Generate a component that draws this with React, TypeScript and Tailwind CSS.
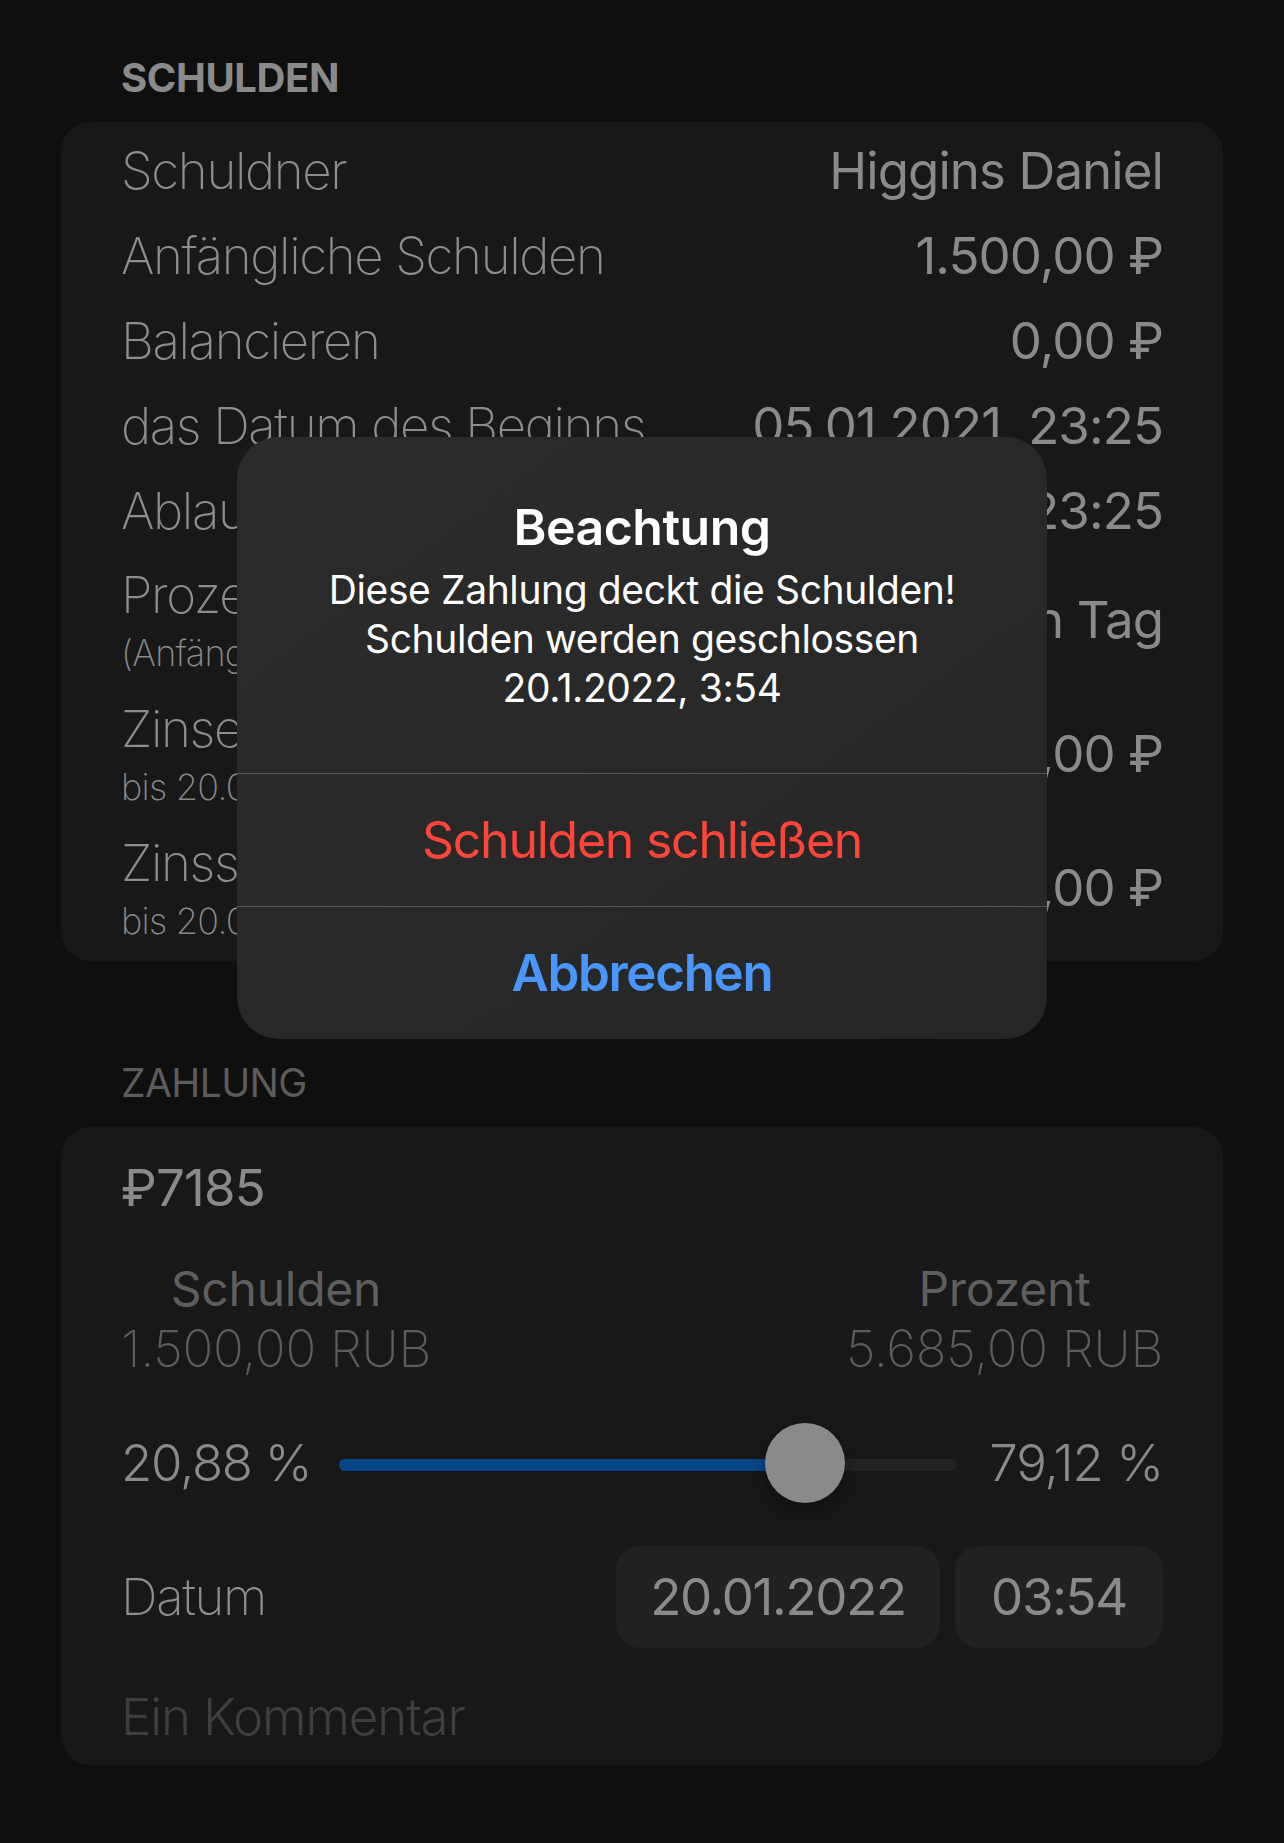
import React from 'react';

type DebtRow = { label: string; value: string; sub?: string };

const DEBT_ROWS: DebtRow[] = [
  { label: 'Schuldner', value: 'Higgins Daniel' },
  { label: 'Anfängliche Schulden', value: '1.500,00 ₽' },
  { label: 'Balancieren', value: '0,00 ₽' },
  { label: 'das Datum des Beginns', value: '05.01.2021, 23:25' },
  { label: 'Ablaufdatum', value: '05.02.2021, 23:25' },
  { label: 'Prozente', sub: '(Anfänglich)', value: '1 % den Tag' },
  { label: 'Zinsen', sub: 'bis 20.01.2022', value: '5.685,00 ₽' },
  { label: 'Zinssumme', sub: 'bis 20.01.2022', value: '7.185,00 ₽' },
];

const Row: React.FC<{ row: DebtRow }> = ({ row }) => {
  if (!row.sub) {
    return (
      <div className="flex h-[85px] items-center justify-between whitespace-nowrap">
        <span className="text-[51px] font-extralight leading-[62px] tracking-[-0.027em] text-[#8d8d8d]">{row.label}</span>
        <span className="text-[51px] leading-[62px] tracking-[-0.018em] text-[#8a8a8a]">{row.value}</span>
      </div>
    );
  }
  return (
    <div className="flex items-center justify-between whitespace-nowrap py-[8px]">
      <div className="flex flex-col">
        <span className="text-[51px] font-extralight leading-[67px] tracking-[-0.027em] text-[#8d8d8d]">{row.label}</span>
        <span className="text-[36px] font-extralight leading-[51px] tracking-[-0.02em] text-[#8a8a8a]">{row.sub}</span>
      </div>
      <span className="text-[51px] leading-[62px] tracking-[-0.018em] text-[#8a8a8a]">{row.value}</span>
    </div>
  );
};

const App: React.FC = () => {
  // Anteil Zinsen am Betrag (79,12 %)
  const share = 0.7912;

  return (
    <div className="relative min-h-screen w-full bg-[#0f0f0f] px-[61px] pt-[54px] pb-[76px] font-['Inter','Liberation_Sans',sans-serif]">
      <h2 className="px-[60px] text-[40px] font-bold leading-[48px] tracking-[-0.01em] text-[#8a8a8a]">SCHULDEN</h2>
      <section className="mt-[20px] rounded-[30px] bg-[#181818] px-[60px] py-[6px]">
        {DEBT_ROWS.map((r) => (
          <Row key={r.label} row={r} />
        ))}
      </section>

      <h2 className="mt-[98px] px-[60px] text-[39px] leading-[48px] tracking-[-0.015em] text-[#5c5c5c]">ZAHLUNG</h2>
      <section className="mt-[20px] rounded-[30px] bg-[#181818] px-[60px] pt-[30px] pb-[17px]">
        <div className="text-[51px] leading-[62px] tracking-[-0.015em] text-[#8a8a8a]">₽7185</div>

        <div className="mt-[41px] flex justify-between whitespace-nowrap">
          <div className="flex flex-col items-center">
            <span className="text-[48px] leading-[58px] tracking-[-0.005em] text-[#5e5e5e]">Schulden</span>
            <span className="text-[51px] font-extralight leading-[62px] tracking-[-0.005em] text-[#5c5c5c]">1.500,00 RUB</span>
          </div>
          <div className="flex flex-col items-center">
            <span className="text-[48px] leading-[58px] tracking-[-0.005em] text-[#5e5e5e]">Prozent</span>
            <span className="text-[51px] font-extralight leading-[62px] tracking-[-0.005em] text-[#5c5c5c]">5.685,00 RUB</span>
          </div>
        </div>

        <div className="mt-[43px] flex h-[80px] items-center whitespace-nowrap">
          <span className="w-[218px] text-[51px] font-light leading-[62px] tracking-[-0.025em] text-[#8a8a8a]">20,88 %</span>
          <div className="relative h-[80px] flex-1">
            <div className="absolute inset-x-0 top-[36px] h-[12px] rounded-full bg-[#222222]" />
            <div
              className="absolute left-0 top-[36px] h-[12px] rounded-full bg-[#08468a]"
              style={{ width: `calc(40px + ${share} * (100% - 80px))` }}
            />
            <div
              className="absolute top-0 h-[80px] w-[80px] rounded-full bg-[#8a8a8a] shadow-[0_8px_18px_rgba(0,0,0,0.35)]"
              style={{ left: `calc(${share} * (100% - 80px))` }}
            />
          </div>
          <span className="w-[206px] text-right text-[51px] font-light leading-[62px] tracking-[-0.02em] text-[#8a8a8a]">79,12 %</span>
        </div>

        <div className="mt-[43px] flex items-center justify-between whitespace-nowrap">
          <span className="text-[51px] font-extralight leading-[62px] tracking-[-0.027em] text-[#8d8d8d]">Datum</span>
          <div className="flex gap-[15px]">
            <div className="flex h-[102px] w-[324px] items-center justify-center rounded-[24px] bg-[#212123] text-[51px] tracking-[-0.025em] text-[#8a8a8a]">
              20.01.2022
            </div>
            <div className="flex h-[102px] w-[208px] items-center justify-center rounded-[24px] bg-[#212123] text-[51px] tracking-[-0.025em] text-[#8a8a8a]">
              03:54
            </div>
          </div>
        </div>

        <div className="mt-[38px] text-[51px] font-light leading-[62px] tracking-[-0.022em] text-[#3e3e3e]">Ein Kommentar</div>
      </section>

      {/* Alert */}
      <div className="absolute left-1/2 top-[437px] w-[810px] -translate-x-1/2 overflow-hidden rounded-[42px] bg-gradient-to-br from-[#2b2b2b] to-[#262626] text-center">
        <div className="px-[40px] py-[61px]">
          <div className="text-[50px] font-semibold leading-[58px] tracking-[-0.01em] text-white">Beachtung</div>
          <div className="mt-[9px] text-[39px] leading-[49px] tracking-[-0.01em] text-white">
            Diese Zahlung deckt die Schulden!
            <br />
            Schulden werden geschlossen
            <br />
            20.1.2022, 3:54
          </div>
        </div>
        <div className="h-px bg-[#565656]" />
        <button className="flex h-[132px] w-full items-center justify-center text-[50px] tracking-[-0.025em] text-[#ff453a]">
          Schulden schließen
        </button>
        <div className="h-px bg-[#565656]" />
        <button className="flex h-[132px] w-full items-center justify-center text-[51px] font-semibold tracking-[-0.025em] text-[#4a96ff]">
          Abbrechen
        </button>
      </div>
    </div>
  );
};

export default App;
